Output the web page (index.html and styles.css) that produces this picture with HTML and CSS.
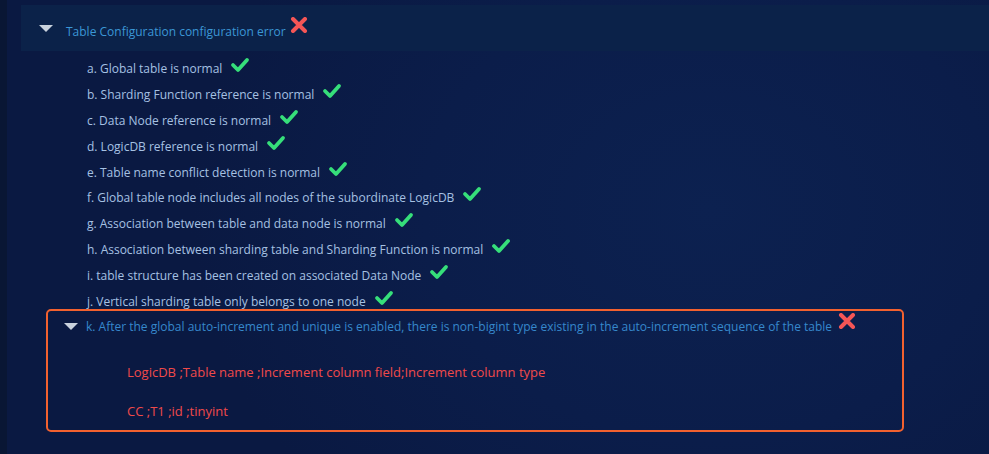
FILE: index.html
```html
<!DOCTYPE html>
<html>
<head>
<meta charset="utf-8">
<link rel="stylesheet" href="styles.css">
</head>
<body>
<div class="page">
  <div class="panel">
    <div class="head">
      <span class="caret"></span>
      <span class="head-title">Table Configuration configuration error</span>
      <svg class="cross" width="18" height="16" viewBox="0 0 18 16"><path d="M3 2 L15 14 M15 2 L3 14" stroke="#f55656" stroke-width="4" stroke-linecap="round"/></svg>
    </div>
    <ul class="checks">
      <li><span>a. Global table is normal</span><svg class="ok" width="20" height="16" viewBox="0 0 20 16"><path d="M3 8 L8 13 L17 3" fill="none" stroke="#36df7a" stroke-width="3.8" stroke-linecap="round" stroke-linejoin="round"/></svg></li>
      <li><span>b. Sharding Function reference is normal</span><svg class="ok" width="20" height="16" viewBox="0 0 20 16"><path d="M3 8 L8 13 L17 3" fill="none" stroke="#36df7a" stroke-width="3.8" stroke-linecap="round" stroke-linejoin="round"/></svg></li>
      <li><span>c. Data Node reference is normal</span><svg class="ok" width="20" height="16" viewBox="0 0 20 16"><path d="M3 8 L8 13 L17 3" fill="none" stroke="#36df7a" stroke-width="3.8" stroke-linecap="round" stroke-linejoin="round"/></svg></li>
      <li><span>d. LogicDB reference is normal</span><svg class="ok" width="20" height="16" viewBox="0 0 20 16"><path d="M3 8 L8 13 L17 3" fill="none" stroke="#36df7a" stroke-width="3.8" stroke-linecap="round" stroke-linejoin="round"/></svg></li>
      <li><span>e. Table name conflict detection is normal</span><svg class="ok" width="20" height="16" viewBox="0 0 20 16"><path d="M3 8 L8 13 L17 3" fill="none" stroke="#36df7a" stroke-width="3.8" stroke-linecap="round" stroke-linejoin="round"/></svg></li>
      <li><span>f. Global table node includes all nodes of the subordinate LogicDB</span><svg class="ok" width="20" height="16" viewBox="0 0 20 16"><path d="M3 8 L8 13 L17 3" fill="none" stroke="#36df7a" stroke-width="3.8" stroke-linecap="round" stroke-linejoin="round"/></svg></li>
      <li><span>g. Association between table and data node is normal</span><svg class="ok" width="20" height="16" viewBox="0 0 20 16"><path d="M3 8 L8 13 L17 3" fill="none" stroke="#36df7a" stroke-width="3.8" stroke-linecap="round" stroke-linejoin="round"/></svg></li>
      <li><span>h. Association between sharding table and Sharding Function is normal</span><svg class="ok" width="20" height="16" viewBox="0 0 20 16"><path d="M3 8 L8 13 L17 3" fill="none" stroke="#36df7a" stroke-width="3.8" stroke-linecap="round" stroke-linejoin="round"/></svg></li>
      <li><span>i. table structure has been created on associated Data Node</span><svg class="ok" width="20" height="16" viewBox="0 0 20 16"><path d="M3 8 L8 13 L17 3" fill="none" stroke="#36df7a" stroke-width="3.8" stroke-linecap="round" stroke-linejoin="round"/></svg></li>
      <li><span>j. Vertical sharding table only belongs to one node</span><svg class="ok" width="20" height="16" viewBox="0 0 20 16"><path d="M3 8 L8 13 L17 3" fill="none" stroke="#36df7a" stroke-width="3.8" stroke-linecap="round" stroke-linejoin="round"/></svg></li>
    </ul>
    <div class="errbox">
      <div class="err-head">
        <span class="caret"></span>
        <span class="err-title">k. After the global auto-increment and unique is enabled, there is non-bigint type existing in the auto-increment sequence of the table</span>
        <svg class="cross" width="18" height="16" viewBox="0 0 18 16"><path d="M3 2 L15 14 M15 2 L3 14" stroke="#f55656" stroke-width="4" stroke-linecap="round"/></svg>
      </div>
      <div class="err-lines">
        <p>LogicDB ;Table name ;Increment column field;Increment column type</p>
        <p>CC ;T1 ;id ;tinyint</p>
      </div>
    </div>
  </div>
</div>
</body>
</html>
```

FILE: styles.css
```css
html, body {
  margin: 0;
  padding: 0;
}
body {
  width: 989px;
  height: 454px;
  overflow: hidden;
  font-family: "Open Sans", "Liberation Sans", sans-serif;
  background: radial-gradient(ellipse 520px 420px at 710px 210px, #0c2150 0%, #0b1d4a 55%, #0a1942 100%);
}
.page {
  height: 454px;
  padding: 5px 0 0 21px;
  box-sizing: border-box;
  background: linear-gradient(to right, #091634 0, #091634 7px, transparent 7px);
}
.head {
  height: 46px;
  background: #0b2249;
  display: flex;
  align-items: center;
  padding-left: 18px;
}
.caret {
  width: 0;
  height: 0;
  border-left: 7px solid transparent;
  border-right: 7px solid transparent;
  border-top: 7px solid #c9d2de;
  margin-top: 1px;
}
.head-title {
  color: #3b97d6;
  font-size: 12px;
  margin-left: 13px;
  margin-top: 7px;
}
.head .cross {
  margin-left: 4px;
  margin-top: -6px;
}
.checks {
  list-style: none;
  margin: 0;
  padding: 5px 0 0 66px;
}
.checks li {
  height: 25.8px;
  display: flex;
  align-items: center;
  color: #a6c1e2;
  font-size: 12px;
}
.checks .ok {
  margin-left: 8px;
  margin-top: -7px;
}
.errbox {
  margin: -5px 0 0 25px;
  width: 854px;
  height: 119px;
  border: 2px solid #f2612f;
  border-radius: 5px;
}
.err-head {
  display: flex;
  align-items: center;
  height: 30px;
  padding-left: 16px;
}
.err-title {
  color: #3688cc;
  font-size: 12px;
  margin-left: 8px;
  margin-top: 2px;
}
.err-head .cross {
  margin-left: 6px;
  margin-top: -9px;
}
.err-lines {
  padding-left: 79px;
  color: #f04a4a;
  font-size: 13px;
}
.err-lines p {
  margin: 0;
  height: 39px;
  line-height: 18px;
}
.err-lines p:first-child {
  margin-top: 22px;
}
```
